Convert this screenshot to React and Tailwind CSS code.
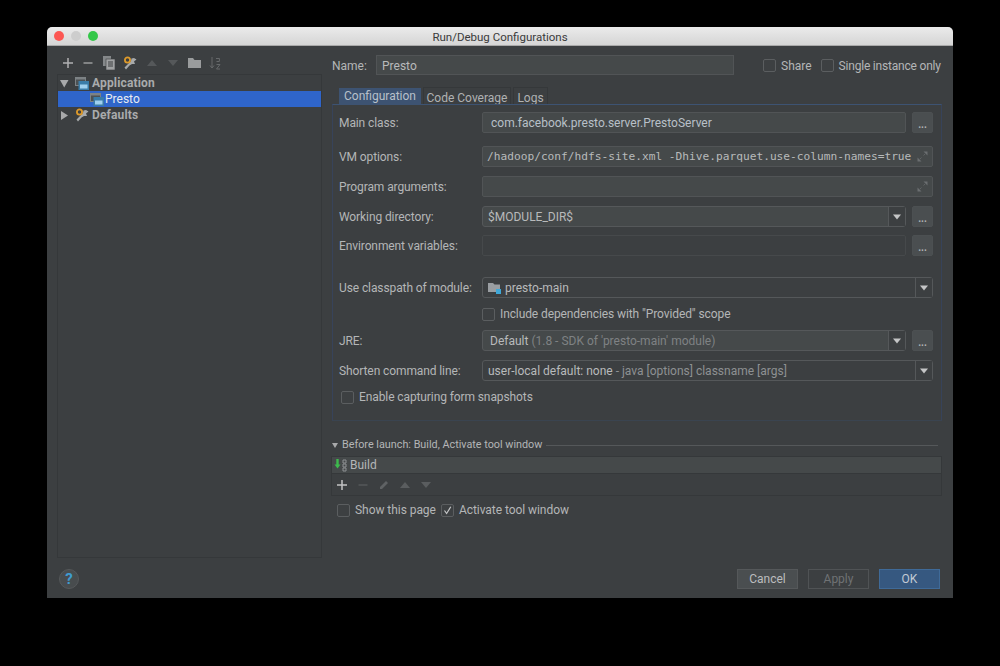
import React from "react";

const AppIcon = ({ className = "" }) => (
  <svg width="14" height="13" viewBox="0 0 14 13" className={`shrink-0 ${className}`}>
    <rect x="0.5" y="0.5" width="10" height="8" fill="#4c5153" stroke="#7d8285" />
    <rect x="0.5" y="0.5" width="10" height="2" fill="#7d8285" />
    <rect x="3.5" y="4" width="10.5" height="9" fill="#3a7ca8" />
    <rect x="5" y="7.5" width="7.5" height="4" fill="#9fd0ee" />
  </svg>
);

const WrenchIcon = ({ className = "" }) => (
  <svg width="14" height="14" viewBox="0 0 14 14" className={`shrink-0 ${className}`}>
    <path d="M13.5 3.5 11 2 8.5 2.5 8 5 5 8 1.5 11.5 3 13.5 6.5 9.5 9 8 12 8 11 5.5Z" fill="#a7a9aa" />
    <circle cx="4.5" cy="4" r="2.6" fill="none" stroke="#dd9a2b" strokeWidth="1.8" />
  </svg>
);

const Triangle = ({ dir = "down", color = "#a8a9aa" }) => (
  <svg width="9" height="9" viewBox="0 0 9 9">
    {dir === "down" ? <path d="M0 1h8.5L4.2 8.5z" fill={color} /> : <path d="M1 0v9L8 4.5z" fill={color} />}
  </svg>
);

const Caret = () => (
  <svg width="8" height="6" viewBox="0 0 8 6">
    <path d="M0 .5h8L4 5.5z" fill="#c4c5c6" />
  </svg>
);

const Expand = () => (
  <svg width="11" height="11" viewBox="0 0 11 11" className="shrink-0">
    <path d="M6.5 .5h4v4z" fill="#6b6e70" />
    <path d="M4.5 10.5h-4v-4z" fill="#6b6e70" />
    <path d="M8 3 6.5 4.5M3 8l1.5-1.5" stroke="#5f6264" strokeWidth="1" />
  </svg>
);

const Check = ({ on = false }) => (
  <span className="flex h-[13px] w-[13px] shrink-0 items-center justify-center rounded-[2px] border border-[#5b5e60] bg-[#3d4042]">
    {on && (
      <svg width="9" height="9" viewBox="0 0 9 9">
        <path d="M1.5 4.5 3.6 7.5 7.8.8" fill="none" stroke="#c5c6c7" strokeWidth="1.2" />
      </svg>
    )}
  </span>
);

const Dots = () => (
  <div className="ml-[6px] flex h-full w-[21px] shrink-0 items-center justify-center rounded-[2px] border border-[#4c5052] bg-[#4a4e50] pt-1 text-[10px] font-bold leading-none text-[#b4b5b6]">
    ...
  </div>
);

const Row = ({ label, top, children }) => (
  <div className={`flex h-[21px] items-center ${top}`}>
    <div className="w-[149px] shrink-0 whitespace-nowrap pl-[6px] tracking-[-0.1px] text-[#b4b6b7]">{label}</div>
    {children}
  </div>
);

const Box = ({ children, dim = false, className = "" }) => (
  <div className={`flex h-full min-w-0 flex-1 items-center rounded-[2px] border ${dim ? "border-[#46494b] bg-[#3c3f41]" : "border-[#515456] bg-[#45494a]"} ${className}`}>
    {children}
  </div>
);

const Combo = ({ children, bg = "bg-[#3c3f41]" }) => (
  <div className={`flex h-full min-w-0 flex-1 items-center rounded-[3px] border border-[#55585a] ${bg}`}>
    <div className="flex min-w-0 flex-1 items-center gap-[4px] truncate pl-[5px] text-[#b8babb]">{children}</div>
    <div className="flex h-full w-[17px] shrink-0 items-center justify-center border-l border-[#55585a] bg-[#3c3f41]">
      <Caret />
    </div>
  </div>
);

const TopIcon = ({ d, color = "#9a9c9d", w = 1.5 }) => (
  <svg width="12" height="12" viewBox="0 0 12 12" className="shrink-0">
    <path d={d} fill="none" stroke={color} strokeWidth={w} />
  </svg>
);

const Up = ({ color = "#55585a" }) => (
  <svg width="12" height="8" viewBox="0 0 12 8" className="shrink-0">
    <path d="M1 7h10L6 1z" fill={color} />
  </svg>
);

const Down = ({ color = "#55585a" }) => (
  <svg width="12" height="8" viewBox="0 0 12 8" className="shrink-0">
    <path d="M1 1h10L6 7z" fill={color} />
  </svg>
);

export default function App() {
  return (
    <div className="h-[666px] w-[1000px] overflow-hidden bg-black pl-[47px] pt-[27px] text-[12px] leading-[14px] [font-family:Roboto,'Liberation_Sans',sans-serif]">
      <div className="flex h-[571px] w-[906px] flex-col overflow-hidden rounded-t-[5px] bg-[#3c3f41]">
        {/* title bar */}
        <div className="relative flex h-[19px] shrink-0 items-center justify-center border-b border-[#a9a9a9] bg-gradient-to-b from-[#ebebeb] to-[#d5d5d5] pt-px text-[11.5px] text-[#3a3a3a]">
          <div className="absolute left-[7px] top-[4px] flex gap-[7px]">
            <span className="h-[10px] w-[10px] rounded-full bg-[#fc5753]" />
            <span className="h-[10px] w-[10px] rounded-full bg-[#cdcdcd]" />
            <span className="h-[10px] w-[10px] rounded-full bg-[#33c748]" />
          </div>
          Run/Debug Configurations
        </div>

        <div className="flex min-h-0 flex-1">
          {/* left side */}
          <div className="flex w-[275px] shrink-0 flex-col pb-[40px] pl-[10px]">
            <div className="flex h-[28px] shrink-0 items-center gap-[8px] pl-[5px] pt-[5px]">
              <TopIcon d="M6 1v10M1 6h10" color="#b0b1b2" />
              <TopIcon d="M1.5 6h9" />
              <svg width="12" height="14" viewBox="0 0 12 14" className="ml-[1px] shrink-0">
                <rect x="0" y="0" width="8" height="10" fill="#85888a" />
                <rect x="3" y="3" width="9" height="11" fill="#a0a2a3" stroke="#3c3f41" strokeWidth="0.6" />
                <path d="M5 6h5M5 8h5M5 10h5" stroke="#3c3f41" />
              </svg>
              <WrenchIcon />
              <span className="ml-[1px] flex"><Up /></span>
              <span className="ml-[1px] flex"><Down /></span>
              <svg width="13" height="11" viewBox="0 0 13 11" className="ml-[1px] shrink-0">
                <path d="M0 1h5l1.5 2H13v8H0z" fill="#9a9c9d" />
              </svg>
              <svg width="13" height="14" viewBox="0 0 13 14" className="shrink-0">
                <path d="M3 1v11M1 9.5 3 12l2-2.5" fill="none" stroke="#66696b" />
                <path d="M7 2.5h3.5l-.2 3H7.5M7.5 8.5h3.5L7.5 13H11" fill="none" stroke="#66696b" />
              </svg>
            </div>
            <div className="min-h-0 flex-1 border border-[#35383a] bg-[#3c3f41]">
              <div className="flex h-4 items-center text-[#a9abac]">
                <span className="ml-[2px] flex w-[15px]"><Triangle /></span>
                <AppIcon />
                <span className="ml-[3px] font-bold tracking-[0.15px]">Application</span>
              </div>
              <div className="flex h-4 items-center bg-[#2f65ca] pl-[32px] text-[#e8ecf2]">
                <AppIcon />
                <span className="ml-[1px]">Presto</span>
              </div>
              <div className="flex h-4 items-center text-[#a9abac]">
                <span className="ml-[2px] flex w-[15px]"><Triangle dir="right" /></span>
                <WrenchIcon />
                <span className="ml-[3px] font-bold tracking-[0.15px]">Defaults</span>
              </div>
            </div>
          </div>

          {/* right side */}
          <div className="flex min-w-0 flex-1 flex-col">
            <div className="ml-[10px] mt-[9px] flex h-5 shrink-0 items-center text-[#b4b6b7]">
              <span className="w-[44px] shrink-0 pt-px">Name:</span>
              <div className="flex h-5 w-[358px] shrink-0 items-center border border-[#515456] bg-[#45494a] pl-[5px] pt-px text-[#b8babb]">Presto</div>
              <div className="ml-[29px]"><Check /></div>
              <span className="ml-[5px] pt-px">Share</span>
              <div className="ml-[9px]"><Check /></div>
              <span className="ml-[5px] whitespace-nowrap pt-px tracking-[-0.2px]">Single instance only</span>
            </div>

            <div className="ml-[10px] mt-[12px] flex h-[17px] shrink-0 items-end gap-[2px] pl-[7px]">
              <div className="flex h-[16px] w-[82px] items-center justify-center bg-[#3d5372] text-[#b8c0ca]">Configuration</div>
              <div className="flex h-[17px] w-[88px] items-center justify-center border-x border-t border-[#35383a] pt-[3px] text-[#b0b2b3]">Code Coverage</div>
              <div className="flex h-[17px] w-[35px] items-center justify-center border-x border-t border-[#35383a] pt-[3px] text-[#b0b2b3]">Logs</div>
            </div>
            <div className="ml-[10px] h-[317px] w-[610px] shrink-0 border border-x-[#37435a] border-b-[#3a4450] border-t-[#3d5372] pr-[8px]">
              <Row label="Main class:" top="mt-[7px]">
                <Box className="pl-2 text-[#b8c0c8]">com.facebook.presto.server.PrestoServer</Box>
                <Dots />
              </Row>
              <Row label="VM options:" top="mt-[13px]">
                <Box className="justify-between px-[4px] text-[11.2px] text-[#b8babb] [font-family:'DejaVu_Sans_Mono',monospace]">
                  <span className="whitespace-nowrap">/hadoop/conf/hdfs-site.xml -Dhive.parquet.use-column-names=true</span>
                  <Expand />
                </Box>
              </Row>
              <Row label="Program arguments:" top="mt-[9px]">
                <Box className="justify-end pr-[4px]"><Expand /></Box>
              </Row>
              <Row label="Working directory:" top="mt-[9px]">
                <Combo bg="bg-[#45494a]">$MODULE_DIR$</Combo>
                <Dots />
              </Row>
              <Row label="Environment variables:" top="mt-[8px]">
                <Box dim />
                <Dots />
              </Row>
              <Row label="Use classpath of module:" top="mt-[21px]">
                <Combo>
                  <svg width="13" height="12" viewBox="0 0 13 12" className="shrink-0">
                    <path d="M0 1h5l1.5 1.5H12V10H0z" fill="#9a9ea2" />
                    <rect x="8" y="7" width="5" height="5" fill="#3fa8d8" />
                  </svg>
                  presto-main
                </Combo>
              </Row>
              <div className="ml-[149px] mt-[9px] flex h-[14px] items-center gap-[5px] tracking-[-0.1px] text-[#b4b6b7]">
                <Check />
                Include dependencies with "Provided" scope
              </div>
              <Row label="JRE:" top="mt-[9px]">
                <Combo bg="bg-[#45494a]">
                  <span className="pl-[2px]">Default <span className="text-[#7f8284]">(1.8 - SDK of 'presto-main' module)</span></span>
                </Combo>
                <Dots />
              </Row>
              <Row label="Shorten command line:" top="mt-[9px]">
                <Combo>
                  <span>user-local default: none <span className="text-[#8e9193]">- java [options] classname [args]</span></span>
                </Combo>
              </Row>
              <div className="ml-[8px] mt-[9px] flex h-[14px] items-center gap-[5px] tracking-[-0.1px] text-[#b4b6b7]">
                <Check />
                Enable capturing form snapshots
              </div>
            </div>

            <div className="ml-[10px] mt-[16px] flex h-4 w-[606px] shrink-0 items-center gap-[4px] text-[10.8px] text-[#b4b6b7]">
              <span className="flex w-[6px] shrink-0"><svg width="6" height="5" viewBox="0 0 6 5"><path d="M0 0h6L3 5z" fill="#a8a9aa" /></svg></span>
              <span className="whitespace-nowrap">Before launch: Build, Activate tool window</span>
              <div className="h-px flex-1 bg-[#55585a]" />
            </div>
            <div className="ml-[9px] mt-[3px] w-[611px] shrink-0 border border-[#35383a]">
              <div className="flex h-[16px] items-center gap-[2px] bg-[#45494a] pl-[2px] text-[#b4b6b7]">
                <svg width="14" height="13" viewBox="0 0 14 13" className="shrink-0">
                  <path d="M3.5 0v6" stroke="#3dbb4d" strokeWidth="2.4" />
                  <path d="M0.5 5.5h6L3.5 9.5z" fill="#3dbb4d" />
                  <path d="M9 1h3v3H9zM9 5h3v3H9zM9 9h3v3H9z" fill="none" stroke="#8e9193" />
                </svg>
                Build
              </div>
              <div className="flex h-[22px] items-center gap-[9px] border-t border-[#35383a] pl-[4px]">
                <TopIcon d="M6 1v10M1 6h10" color="#c2c3c4" />
                <TopIcon d="M1.5 6h9" color="#55585a" />
                <svg width="12" height="12" viewBox="0 0 12 12" className="shrink-0"><path d="M2 8 8 2l2 2-6 6H2z" fill="#5f6264" /></svg>
                <Up color="#5a5d5f" />
                <Down color="#5a5d5f" />
              </div>
            </div>
            <div className="ml-[15px] mt-[7px] flex h-[14px] shrink-0 items-center tracking-[-0.05px] text-[#b4b6b7]">
              <Check />
              <span className="ml-[5px]">Show this page</span>
              <span className="ml-[5px]"><Check on /></span>
              <span className="ml-[5px]">Activate tool window</span>
            </div>
          </div>
        </div>
      </div>
      {/* footer is laid over the bottom strip */}
      <div className="relative -mt-[29px] flex h-5 w-[906px] items-center justify-between pl-[12px] pr-[13px]">
        <div className="flex h-5 w-5 items-center justify-center rounded-full border border-[#55585a] bg-[#484c4e] text-[15px] font-bold text-[#3f9bd0]">?</div>
        <div className="flex gap-[10px]">
          <div className="flex h-5 w-[61px] items-center justify-center border border-[#55585a] bg-[#4a4e50] text-[#bcbdbe]">Cancel</div>
          <div className="flex h-5 w-[61px] items-center justify-center border border-[#505355] text-[#6f7274]">Apply</div>
          <div className="flex h-5 w-[61px] items-center justify-center border border-[#3f6a98] bg-[#365880] text-[#c2cad4]">OK</div>
        </div>
      </div>
    </div>
  );
}
